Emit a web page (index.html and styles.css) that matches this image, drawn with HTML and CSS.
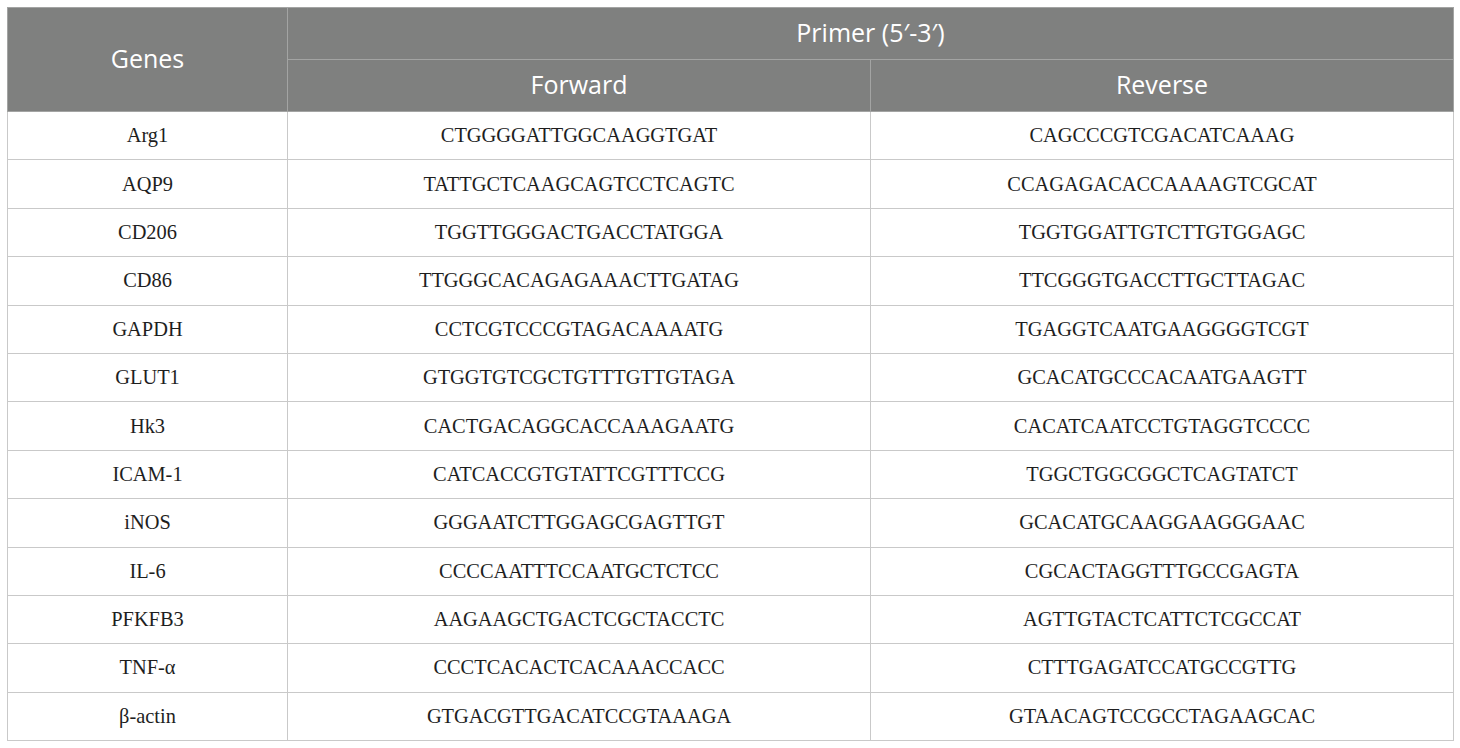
FILE: index.html
```html
<!DOCTYPE html>
<html>
<head>
<meta charset="utf-8">
<link rel="stylesheet" href="styles.css">
</head>
<body>
<div class="wrap">
<table class="primers">
<colgroup><col class="c1"><col class="c2"><col class="c3"></colgroup>
<thead>
<tr class="h1"><th rowspan="2">Genes</th><th colspan="2">Primer (5′-3′)</th></tr>
<tr class="h2"><th>Forward</th><th>Reverse</th></tr>
</thead>
<tbody>
<tr><td>Arg1</td><td>CTGGGGATTGGCAAGGTGAT</td><td>CAGCCCGTCGACATCAAAG</td></tr>
<tr><td>AQP9</td><td>TATTGCTCAAGCAGTCCTCAGTC</td><td>CCAGAGACACCAAAAGTCGCAT</td></tr>
<tr><td>CD206</td><td>TGGTTGGGACTGACCTATGGA</td><td>TGGTGGATTGTCTTGTGGAGC</td></tr>
<tr><td>CD86</td><td>TTGGGCACAGAGAAACTTGATAG</td><td>TTCGGGTGACCTTGCTTAGAC</td></tr>
<tr><td>GAPDH</td><td>CCTCGTCCCGTAGACAAAATG</td><td>TGAGGTCAATGAAGGGGTCGT</td></tr>
<tr><td>GLUT1</td><td>GTGGTGTCGCTGTTTGTTGTAGA</td><td>GCACATGCCCACAATGAAGTT</td></tr>
<tr><td>Hk3</td><td>CACTGACAGGCACCAAAGAATG</td><td>CACATCAATCCTGTAGGTCCCC</td></tr>
<tr><td>ICAM-1</td><td>CATCACCGTGTATTCGTTTCCG</td><td>TGGCTGGCGGCTCAGTATCT</td></tr>
<tr><td>iNOS</td><td>GGGAATCTTGGAGCGAGTTGT</td><td>GCACATGCAAGGAAGGGAAC</td></tr>
<tr><td>IL-6</td><td>CCCCAATTTCCAATGCTCTCC</td><td>CGCACTAGGTTTGCCGAGTA</td></tr>
<tr><td>PFKFB3</td><td>AAGAAGCTGACTCGCTACCTC</td><td>AGTTGTACTCATTCTCGCCAT</td></tr>
<tr><td>TNF-α</td><td>CCCTCACACTCACAAACCACC</td><td>CTTTGAGATCCATGCCGTTG</td></tr>
<tr><td>β-actin</td><td>GTGACGTTGACATCCGTAAAGA</td><td>GTAACAGTCCGCCTAGAAGCAC</td></tr>
</tbody>
</table>
</div>
</body>
</html>
```

FILE: styles.css
```css
html, body {
  margin: 0;
  padding: 0;
  background: #ffffff;
}
.wrap {
  padding: 7px 7px 0 7px;
}
.primers {
  width: 1446px;
  border-collapse: collapse;
  table-layout: fixed;
}
.c1 { width: 280px; }
.c2 { width: 583px; }
.c3 { width: 583px; }
.primers th {
  background: #7f807f;
  color: #ffffff;
  font-family: "Open Sans", "Noto Sans", sans-serif;
  font-weight: 400;
  font-size: 25px;
  line-height: 30px;
  height: 48px;
  padding: 0 0 3px 0;
  border: 1px solid #a3a4a3;
  text-align: center;
  vertical-align: middle;
}
.primers td {
  font-family: "Liberation Serif", "Times New Roman", serif;
  font-size: 20.4px;
  color: #1e1e1e;
  text-align: center;
  vertical-align: middle;
  height: 47.4px;
  padding: 0;
  border: 1px solid #c9c9c9;
}
```
